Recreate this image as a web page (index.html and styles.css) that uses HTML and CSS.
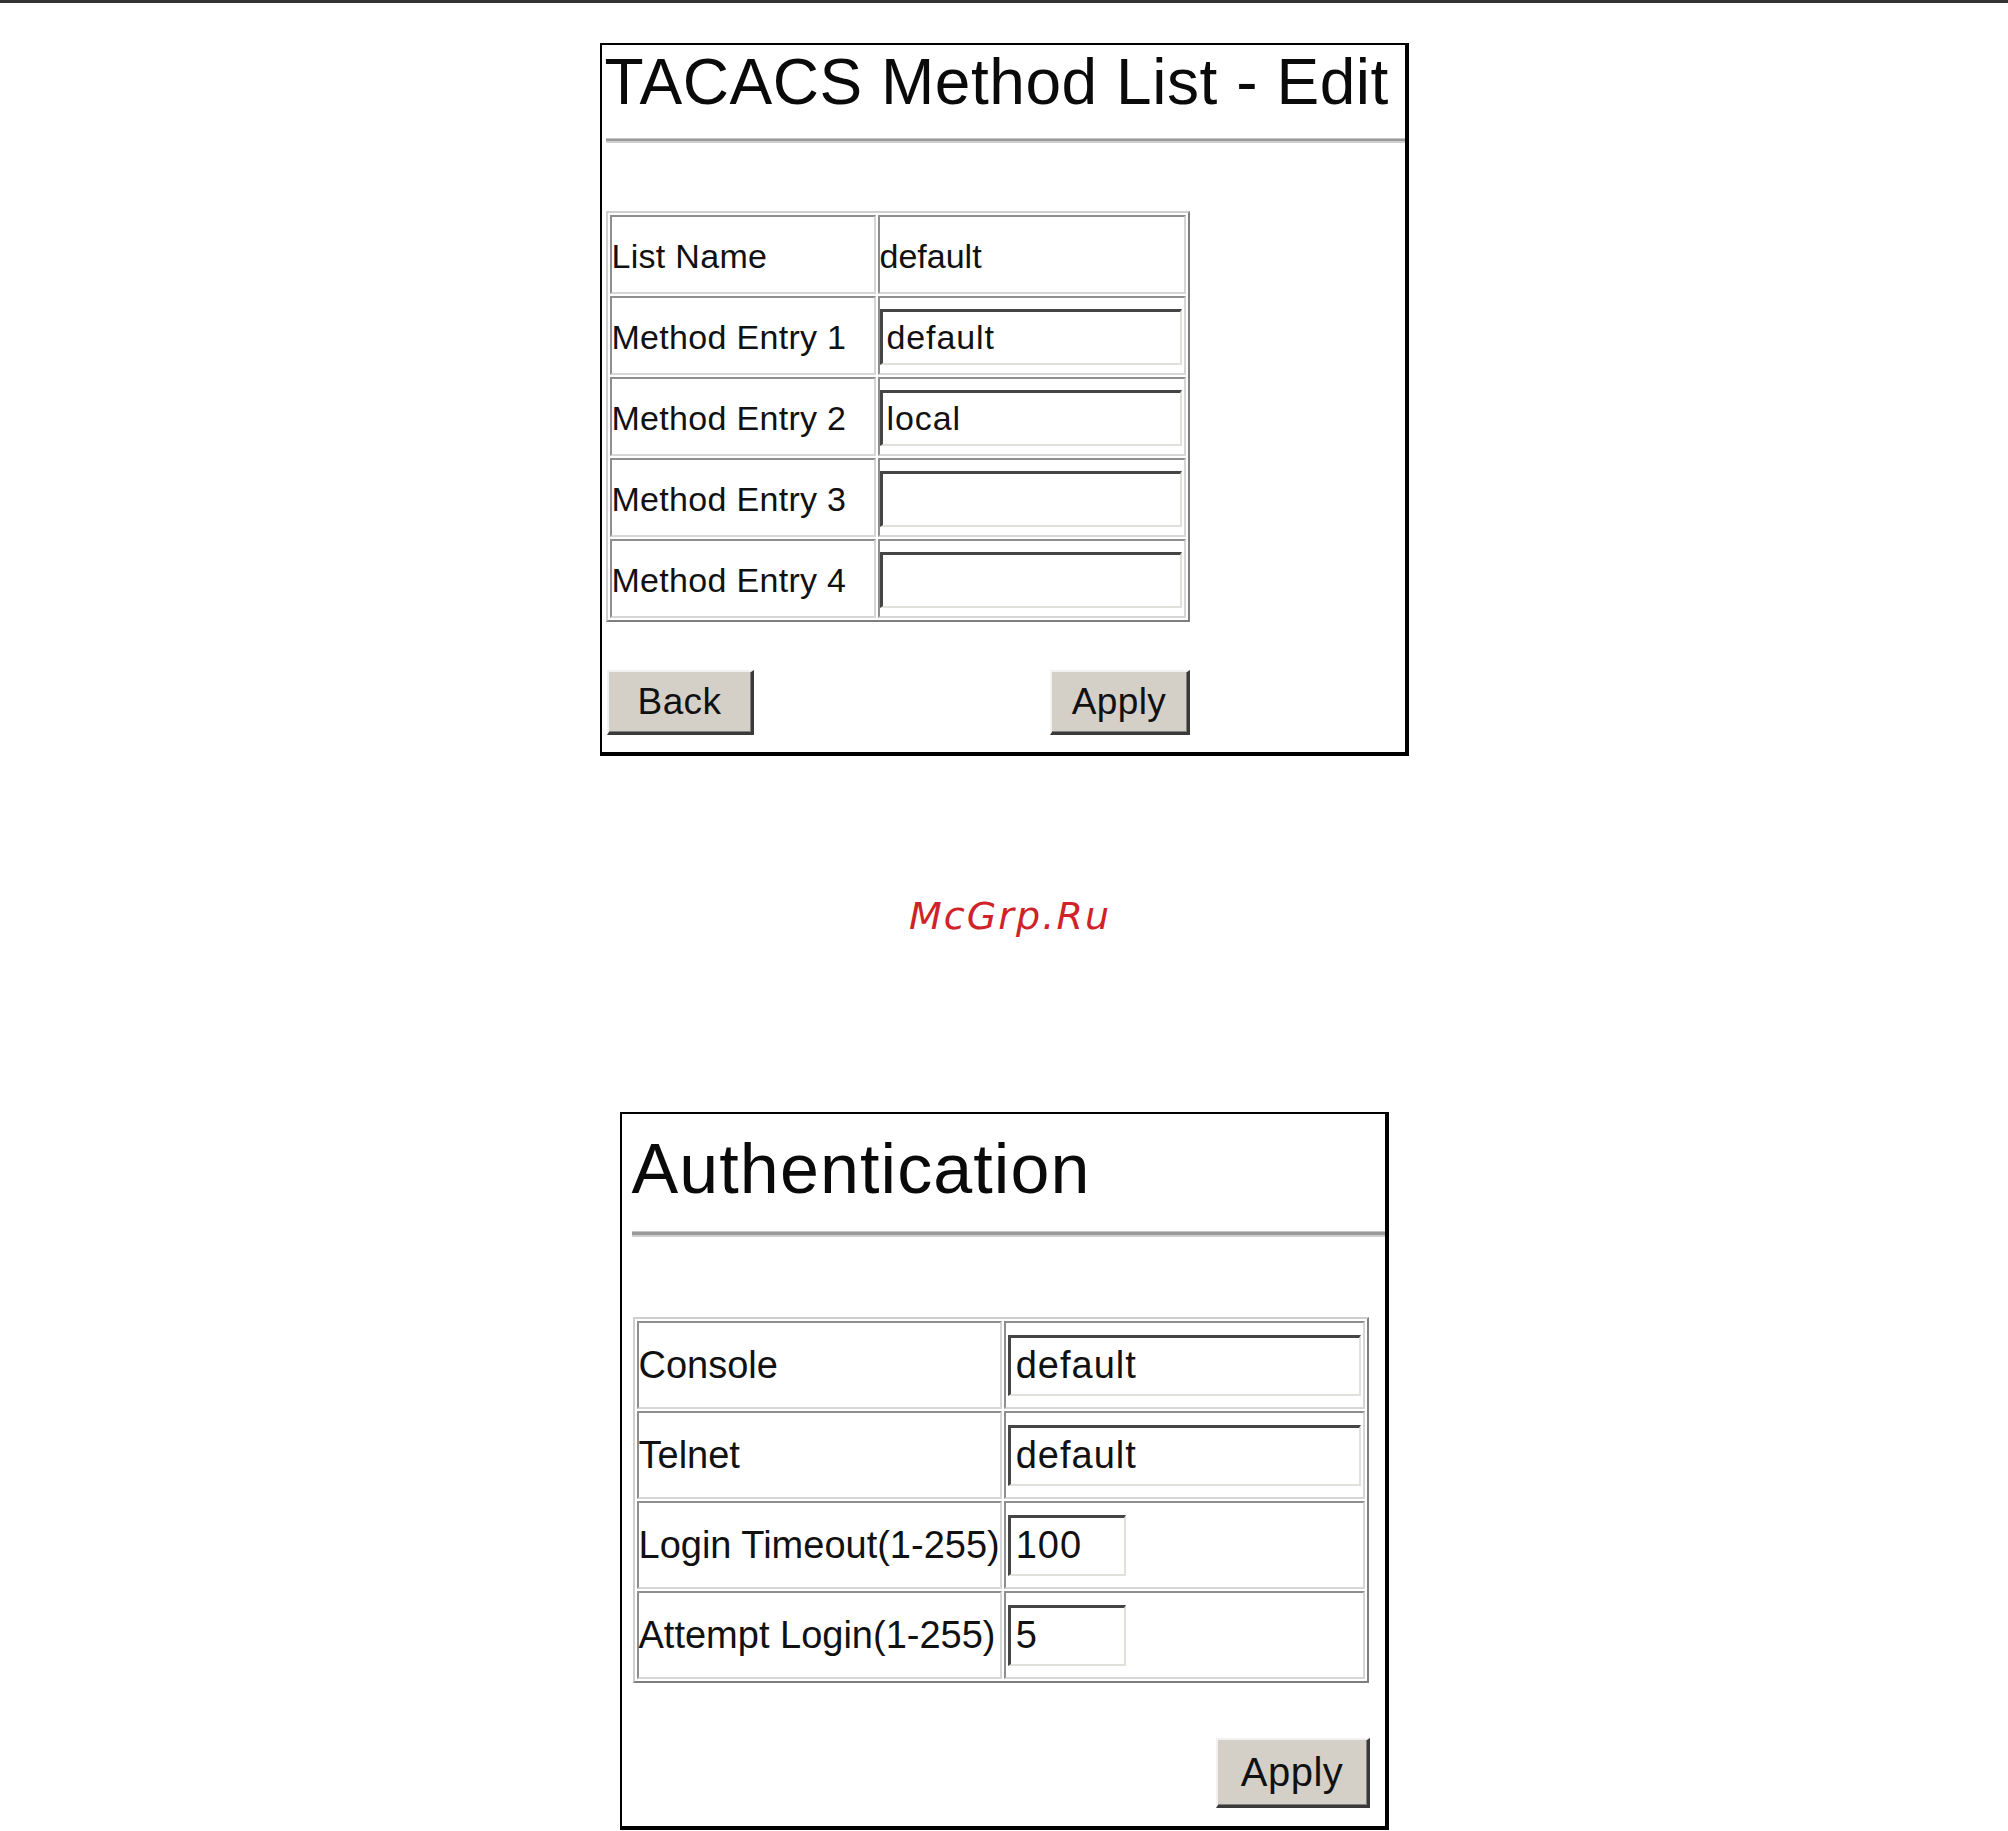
FILE: index.html
```html
<!DOCTYPE html>
<html lang="en">
<head>
<meta charset="utf-8">
<title>TACACS Method List - Edit / Authentication</title>
<link rel="stylesheet" href="styles.css">
</head>
<body>
<div class="topbar"></div>
<div class="page">
  <section class="panel panel-tacacs">
    <h1 class="title">TACACS Method List - Edit</h1>
    <div class="rule"></div>
    <table class="grid">
      <tr><td class="lbl">List Name</td><td class="val">default</td></tr>
      <tr><td class="lbl">Method Entry 1</td><td class="val"><input class="field" type="text" value="default"></td></tr>
      <tr><td class="lbl">Method Entry 2</td><td class="val"><input class="field" type="text" value="local"></td></tr>
      <tr><td class="lbl">Method Entry 3</td><td class="val"><input class="field" type="text" value=""></td></tr>
      <tr><td class="lbl">Method Entry 4</td><td class="val"><input class="field" type="text" value=""></td></tr>
    </table>
    <div class="actions">
      <button class="btn btn-back" type="button">Back</button>
      <button class="btn btn-apply" type="button">Apply</button>
    </div>
  </section>

  <div class="watermark">McGrp.Ru</div>

  <section class="panel panel-auth">
    <h1 class="title">Authentication</h1>
    <div class="rule"></div>
    <table class="grid">
      <tr><td class="lbl">Console</td><td class="val"><input class="field" type="text" value="default"></td></tr>
      <tr><td class="lbl">Telnet</td><td class="val"><input class="field" type="text" value="default"></td></tr>
      <tr><td class="lbl">Login Timeout(1-255)</td><td class="val"><input class="field short" type="text" value="100"></td></tr>
      <tr><td class="lbl">Attempt Login(1-255)</td><td class="val"><input class="field short" type="text" value="5"></td></tr>
    </table>
    <div class="actions">
      <button class="btn btn-apply" type="button">Apply</button>
    </div>
  </section>
</div>
</body>
</html>
```
FILE: styles.css
```css
html, body {
  margin: 0;
  padding: 0;
  background: #ffffff;
}
body {
  font-family: "Liberation Sans", Arial, sans-serif;
  color: #111;
}
.topbar {
  height: 3px;
  background: #333333;
}
.page {
  display: flex;
  flex-direction: column;
  align-items: center;
}

/* ---------- panels ---------- */
.panel {
  box-sizing: border-box;
  border-style: solid;
  border-color: #000;
  border-width: 2px 4px 4px 2px;
  background: #fff;
  display: flex;
  flex-direction: column;
  align-items: flex-start;
}
.title {
  margin: 0;
  font-weight: normal;
  color: #0a0a0a;
  white-space: nowrap;
}
.rule {
  align-self: stretch;
  height: 2px;
  background: #9a9a9a;
  border-top: 1px solid #c4c4c4;
  border-bottom: 2px solid #cfcfcf;
}

/* ---------- tables ---------- */
.grid {
  border-collapse: separate;
  border-spacing: 2px;
  border-style: solid;
  border-width: 2px;
  border-color: #cfcfcf #7e7e7e #7e7e7e #cfcfcf;
}
.grid td {
  box-sizing: border-box;
  padding: 0;
  border-style: solid;
  border-width: 2px;
  border-color: #8e8e8e #d6d6d6 #d6d6d6 #8e8e8e;
  vertical-align: middle;
  white-space: nowrap;
  color: #111;
}
.field {
  box-sizing: border-box;
  display: block;
  margin: 0;
  border-style: solid;
  border-width: 3px 2px 2px 3px;
  border-color: #454545 #e2e0da #e2e0da #454545;
  background: #fff;
  font-family: "Liberation Sans", Arial, sans-serif;
  color: #111;
  outline: none;
}

/* ---------- buttons ---------- */
.actions {
  display: flex;
  justify-content: space-between;
}
.btn {
  box-sizing: border-box;
  margin: 0;
  padding: 0;
  background: #d4d0c8;
  border-style: solid;
  border-width: 2px 3px 3px 2px;
  border-color: #f2f2f2 #3a3a3a #3a3a3a #f2f2f2;
  box-shadow: inset -1px -1px 0 #808080;
  font-family: "Liberation Sans", Arial, sans-serif;
  color: #111;
  text-align: center;
  cursor: default;
}

/* ---------- TACACS panel ---------- */
.panel-tacacs {
  width: 809px;
  margin-top: 40px;
  padding-bottom: 17px;
}
.panel-tacacs .title {
  margin-top: 5px;
  padding-left: 3px;
  font-size: 64px;
  line-height: 64px;
  letter-spacing: 0.55px;
}
.panel-tacacs .rule {
  margin-top: 24px;
  margin-left: 4px;
}
.panel-tacacs .grid {
  margin-top: 68px;
  margin-left: 4px;
  width: 584px;
}
.panel-tacacs .grid td {
  height: 79px;
  font-size: 34px;
  line-height: 34px;
  letter-spacing: 0.3px;
  padding-top: 2px;
}
.panel-tacacs .grid td.lbl { width: 266px; }
.panel-tacacs .grid td.val { width: 308px; letter-spacing: 0; }
.panel-tacacs .field {
  width: 302px;
  height: 56px;
  padding: 0 4px;
  font-size: 34px;
  letter-spacing: 0.9px;
}
.panel-tacacs .actions {
  margin-top: 48px;
  margin-left: 5px;
  width: 583px;
}
.panel-tacacs .btn {
  height: 65px;
  font-size: 37px;
  letter-spacing: 0.4px;
}
.panel-tacacs .btn-back { width: 147px; }
.panel-tacacs .btn-apply { width: 140px; }

/* ---------- watermark ---------- */
.watermark {
  margin-top: 141px;
  padding-left: 12px;
  font-family: "DejaVu Sans", "Liberation Sans", sans-serif;
  font-style: italic;
  font-size: 38px;
  line-height: 38px;
  letter-spacing: 2.1px;
  color: #cf2229;
}

/* ---------- Authentication panel ---------- */
.panel-auth {
  width: 769px;
  margin-top: 177px;
  padding-bottom: 18px;
}
.panel-auth .title {
  margin-top: 20px;
  padding-left: 10px;
  font-size: 70px;
  line-height: 70px;
  letter-spacing: 1.1px;
}
.panel-auth .rule {
  margin-top: 27px;
  margin-left: 10px;
  height: 3px;
}
.panel-auth .grid {
  margin-top: 80px;
  margin-left: 11px;
  width: 736px;
}
.panel-auth .grid td {
  height: 88px;
  font-size: 38px;
  line-height: 38px;
}
.panel-auth .grid td.lbl { width: 365px; }
.panel-auth .grid td.val { width: 361px; }
.panel-auth .field {
  width: 353px;
  height: 61px;
  margin-left: 2px;
  padding: 0 5px;
  font-size: 38px;
  letter-spacing: 1px;
}
.panel-auth .field.short { width: 118px; }
.panel-auth .actions {
  margin-top: 55px;
  margin-left: 11px;
  width: 737px;
  justify-content: flex-end;
}
.panel-auth .btn {
  width: 154px;
  height: 70px;
  font-size: 40px;
  letter-spacing: 0.5px;
}
```
